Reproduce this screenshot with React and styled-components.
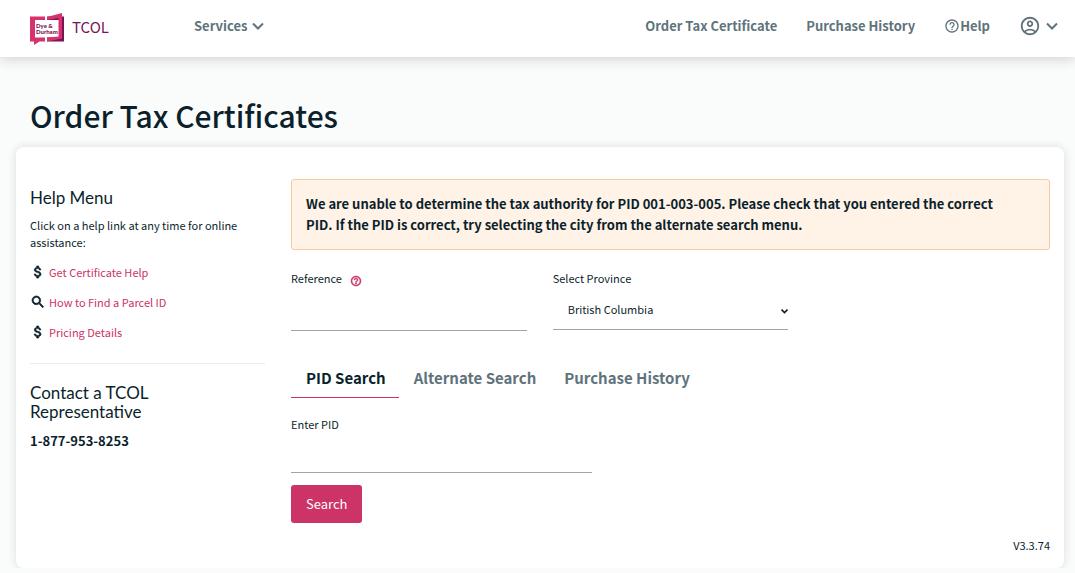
import { useState } from 'react';
import styled, { createGlobalStyle } from 'styled-components';
import { MdOutlineAccountCircle, MdHelpOutline, MdSearch, MdAttachMoney, MdClose } from 'react-icons/md';

const GlobalStyle = createGlobalStyle`
  * {
    box-sizing: border-box;
  }
  body {
    margin: 0;
    background: #fafcfb;
    color: #0b1f2c;
    font-family: 'Noto Sans CJK SC', 'Open Sans', sans-serif;
    font-size: 11px;
    line-height: 17px;
  }
  button, input, select {
    font: inherit;
    color: inherit;
  }
`;

const Header = styled.header`
  display: flex;
  align-items: center;
  height: 57px;
  padding: 0 17px 0 30px;
  background: #fff;
  box-shadow: 0 2px 12px rgba(30, 40, 40, 0.2);
`;
const Brand = styled.a`
  display: flex;
  align-items: center;
  gap: 8px;
  width: 164px;
  color: #7a1457;
  font-size: 15px;
  line-height: 24px;
  text-decoration: none;
`;
const BrandName = styled.span`
  padding-bottom: 4px;
`;
const Nav = styled.nav`
  display: flex;
  flex: 1;
  align-items: center;
  gap: 29px;
  padding-bottom: 6px;
`;
const NavItem = styled.a`
  display: flex;
  align-items: center;
  color: #60737c;
  font-size: 13px;
  font-weight: 700;
  line-height: 20px;
  text-decoration: none;
`;
const MenuButton = styled.button`
  display: flex;
  align-items: center;
  gap: 5px;
  padding: 0;
  border: 0;
  background: none;
  color: #60737c;
  font-size: 13px;
  font-weight: 700;
  line-height: 20px;
  cursor: pointer;
`;
const Spacer = styled.div`
  flex: 1;
`;

const Title = styled.h1`
  margin: 0;
  padding: 38px 30px 12px;
  font-size: 30px;
  font-weight: 500;
  line-height: 40px;
`;
const Card = styled.main`
  display: grid;
  grid-template-columns: 1fr 3fr;
  margin: 0 11px 0 16px;
  padding: 32px 0 14px;
  border-radius: 8px;
  background: #fff;
  box-shadow: 0 0 10px rgba(30, 40, 40, 0.14);
`;
const Sidebar = styled.aside`
  padding: 9px 13px 0 14px;
`;
const SideHeading = styled.h2`
  max-width: 160px;
  margin: 0;
  font-family: Lato, sans-serif;
  font-size: 17px;
  font-weight: 400;
  line-height: 19px;
`;
const SideText = styled.p`
  margin: 10px 0 12px;
`;
const HelpList = styled.ul`
  display: flex;
  flex-direction: column;
  gap: 12px;
  margin: 0;
  padding: 0 0 22px;
  border-bottom: 1px solid #e9eded;
  list-style: none;
`;
const HelpItem = styled.li`
  display: flex;
  align-items: center;
  gap: 3px;
  height: 18px;
`;
const HelpIcon = styled.span`
  display: flex;

  path:not([fill='none']) {
    stroke-width: 1;
  }
`;
const HelpLink = styled.a`
  color: #cc3366;
  text-decoration: none;
`;
const Contact = styled.section`
  padding-top: 19px;
`;
const Phone = styled.p`
  margin: 10px 0 0;
  font-size: 13px;
  font-weight: 700;
  line-height: 20px;
`;

const Content = styled.div`
  padding: 0 14px 0 13px;
`;
const Alert = styled.div`
  display: flex;
  align-items: flex-start;
  justify-content: space-between;
  margin-bottom: 20px;
  padding: 13px 10px 14px 14px;
  border: 1px solid #ffc997;
  border-radius: 3px;
  background: #fff2e6;
  font-size: 13px;
  font-weight: 700;
  line-height: 21px;
`;
const AlertText = styled.p`
  max-width: 700px;
  margin: 0;
`;
const CloseButton = styled.button`
  display: flex;
  padding: 2px 0;
  border: 0;
  background: none;
  color: #fff5ee;
  cursor: pointer;
`;
const Fields = styled.div`
  display: grid;
  grid-template-columns: repeat(12, 1fr);
  column-gap: 26px;
`;
const Field = styled.div`
  display: flex;
  flex-direction: column;
  grid-column: span ${(props) => props.$span};
`;
const LabelRow = styled.div`
  display: flex;
  align-items: center;
  gap: 8px;
`;
const HelpTip = styled.button`
  display: flex;
  padding: 4px 0 0;
  border: 0;
  background: none;
  color: #cc3366;

  path:not([fill='none']) {
    stroke-width: 1;
  }
`;
const Input = styled.input`
  width: 100%;
  height: ${(props) => props.$height};
  padding: 0 14px;
  border: 0;
  border-bottom: 1px solid #98a6ad;
  background: transparent;
  outline: none;
`;
const SelectBox = styled.div`
  display: flex;
  align-items: center;
  position: relative;
  margin-top: 4px;
`;
const Select = styled.select`
  width: 100%;
  height: 39px;
  padding: 0 14px 2px 15px;
  border: 0;
  border-bottom: 1px solid #98a6ad;
  background: transparent;
  appearance: none;
  outline: none;
`;
const SelectArrow = styled.span`
  display: flex;
  position: absolute;
  right: 0;
  color: #0b1f2c;
  pointer-events: none;
`;
const Tabs = styled.div`
  display: flex;
  margin: 28px 0 18px;
`;
const Tab = styled.button`
  height: 39px;
  padding: 0 13px 0 15px;
  border: 0;
  border-bottom: 1px solid ${(props) => (props.$active ? '#cc3366' : 'transparent')};
  background: none;
  color: ${(props) => (props.$active ? '#0b1f2c' : '#60737c')};
  font-size: 15px;
  font-weight: 700;
  line-height: 22px;
  cursor: pointer;
`;
const SearchButton = styled.button`
  height: 38px;
  margin-top: 12px;
  padding: 0 15px 1px;
  border: 0;
  border-radius: 3px;
  background: #cc3366;
  color: #fff;
  font-size: 13px;
  cursor: pointer;
`;
const Version = styled.p`
  margin: 14px 0 0;
  text-align: right;
`;
const LogoText = styled.text`
  fill: #7a1457;
  font-family: Lato, sans-serif;
  font-size: 6px;
  font-weight: 900;
`;

const Chevron = () => (
  <svg width="12" height="12" viewBox="0 0 12 12" fill="none" stroke="currentColor" strokeWidth="2" aria-hidden="true">
    <path d="M1 3.500l5 5 5-5" />
  </svg>
);

const SmallChevron = () => (
  <svg width="7" height="7" viewBox="0 0 7 7" fill="none" stroke="currentColor" strokeWidth="1.600" aria-hidden="true">
    <path d="M.5 2.500l3 3 3-3" />
  </svg>
);

const Logo = () => (
  <svg width="34" height="32" viewBox="0 0 34 32" aria-hidden="true">
    <path d="M17 3.500h17v25H17v-4h12V7H17z" fill="#7a1457" />
    <path d="M0 3.500h15V7H5v17.500h10v4H9.500L4 32v-3.500H0z" fill="#d6336c" />
    <path d="M17 4L32 0v25.500l-15 3v-4l11.500-1V5L17 7z" fill="#d6336c" />
    <LogoText x="6" y="15">Dye &amp;</LogoText>
    <LogoText x="6" y="21">Durham</LogoText>
  </svg>
);

const helpLinks = [
  { text: 'Get Certificate Help', Icon: MdAttachMoney },
  { text: 'How to Find a Parcel ID', Icon: MdSearch },
  { text: 'Pricing Details', Icon: MdAttachMoney },
];
const tabs = ['PID Search', 'Alternate Search', 'Purchase History'];

function App() {
  const [activeTab, setActiveTab] = useState('PID Search');
  const [showAlert, setShowAlert] = useState(true);

  return (
    <>
      <GlobalStyle />
      <Header>
        <Brand href="#">
          <Logo />
          <BrandName>TCOL</BrandName>
        </Brand>
        <Nav>
          <MenuButton>
            Services <Chevron />
          </MenuButton>
          <Spacer />
          <NavItem href="#">Order Tax Certificate</NavItem>
          <NavItem href="#">Purchase History</NavItem>
          <NavItem href="#">
            <MdHelpOutline size={16} />
            Help
          </NavItem>
          <MenuButton aria-label="Account">
            <MdOutlineAccountCircle size={22} />
            <Chevron />
          </MenuButton>
        </Nav>
      </Header>
      <Title>Order Tax Certificates</Title>
      <Card>
        <Sidebar>
          <SideHeading>Help Menu</SideHeading>
          <SideText>Click on a help link at any time for online assistance:</SideText>
          <HelpList>
            {helpLinks.map(({ text, Icon }) => (
              <HelpItem key={text}>
                <HelpIcon>
                  <Icon size={16} />
                </HelpIcon>
                <HelpLink href="#">{text}</HelpLink>
              </HelpItem>
            ))}
          </HelpList>
          <Contact>
            <SideHeading>Contact a TCOL Representative</SideHeading>
            <Phone>1-877-953-8253</Phone>
          </Contact>
        </Sidebar>
        <Content>
          {showAlert && (
            <Alert role="alert">
              <AlertText>
                We are unable to determine the tax authority for PID 001-003-005. Please check that you entered the
                correct PID. If the PID is correct, try selecting the city from the alternate search menu.
              </AlertText>
              <CloseButton aria-label="Close" onClick={() => setShowAlert(false)}>
                <MdClose size={14} />
              </CloseButton>
            </Alert>
          )}
          <Fields>
            <Field $span={4}>
              <LabelRow>
                <label htmlFor="reference">Reference</label>
                <HelpTip type="button" aria-label="Reference help">
                  <MdHelpOutline size={12} />
                </HelpTip>
              </LabelRow>
              <Input id="reference" type="text" $height="44px" />
            </Field>
            <Field $span={4}>
              <label htmlFor="province">Select Province</label>
              <SelectBox>
                <Select id="province" defaultValue="BC">
                  <option value="BC">British Columbia</option>
                </Select>
                <SelectArrow>
                  <SmallChevron />
                </SelectArrow>
              </SelectBox>
            </Field>
          </Fields>
          <Tabs role="tablist">
            {tabs.map((el) => (
              <Tab key={el} role="tab" aria-selected={activeTab === el} $active={activeTab === el} onClick={() => setActiveTab(el)}>
                {el}
              </Tab>
            ))}
          </Tabs>
          <Fields>
            <Field $span={5}>
              <label htmlFor="pid">Enter PID</label>
              <Input id="pid" type="text" $height="40px" />
            </Field>
          </Fields>
          <SearchButton type="submit">Search</SearchButton>
          <Version>V3.3.74</Version>
        </Content>
      </Card>
    </>
  );
}

export default App;
